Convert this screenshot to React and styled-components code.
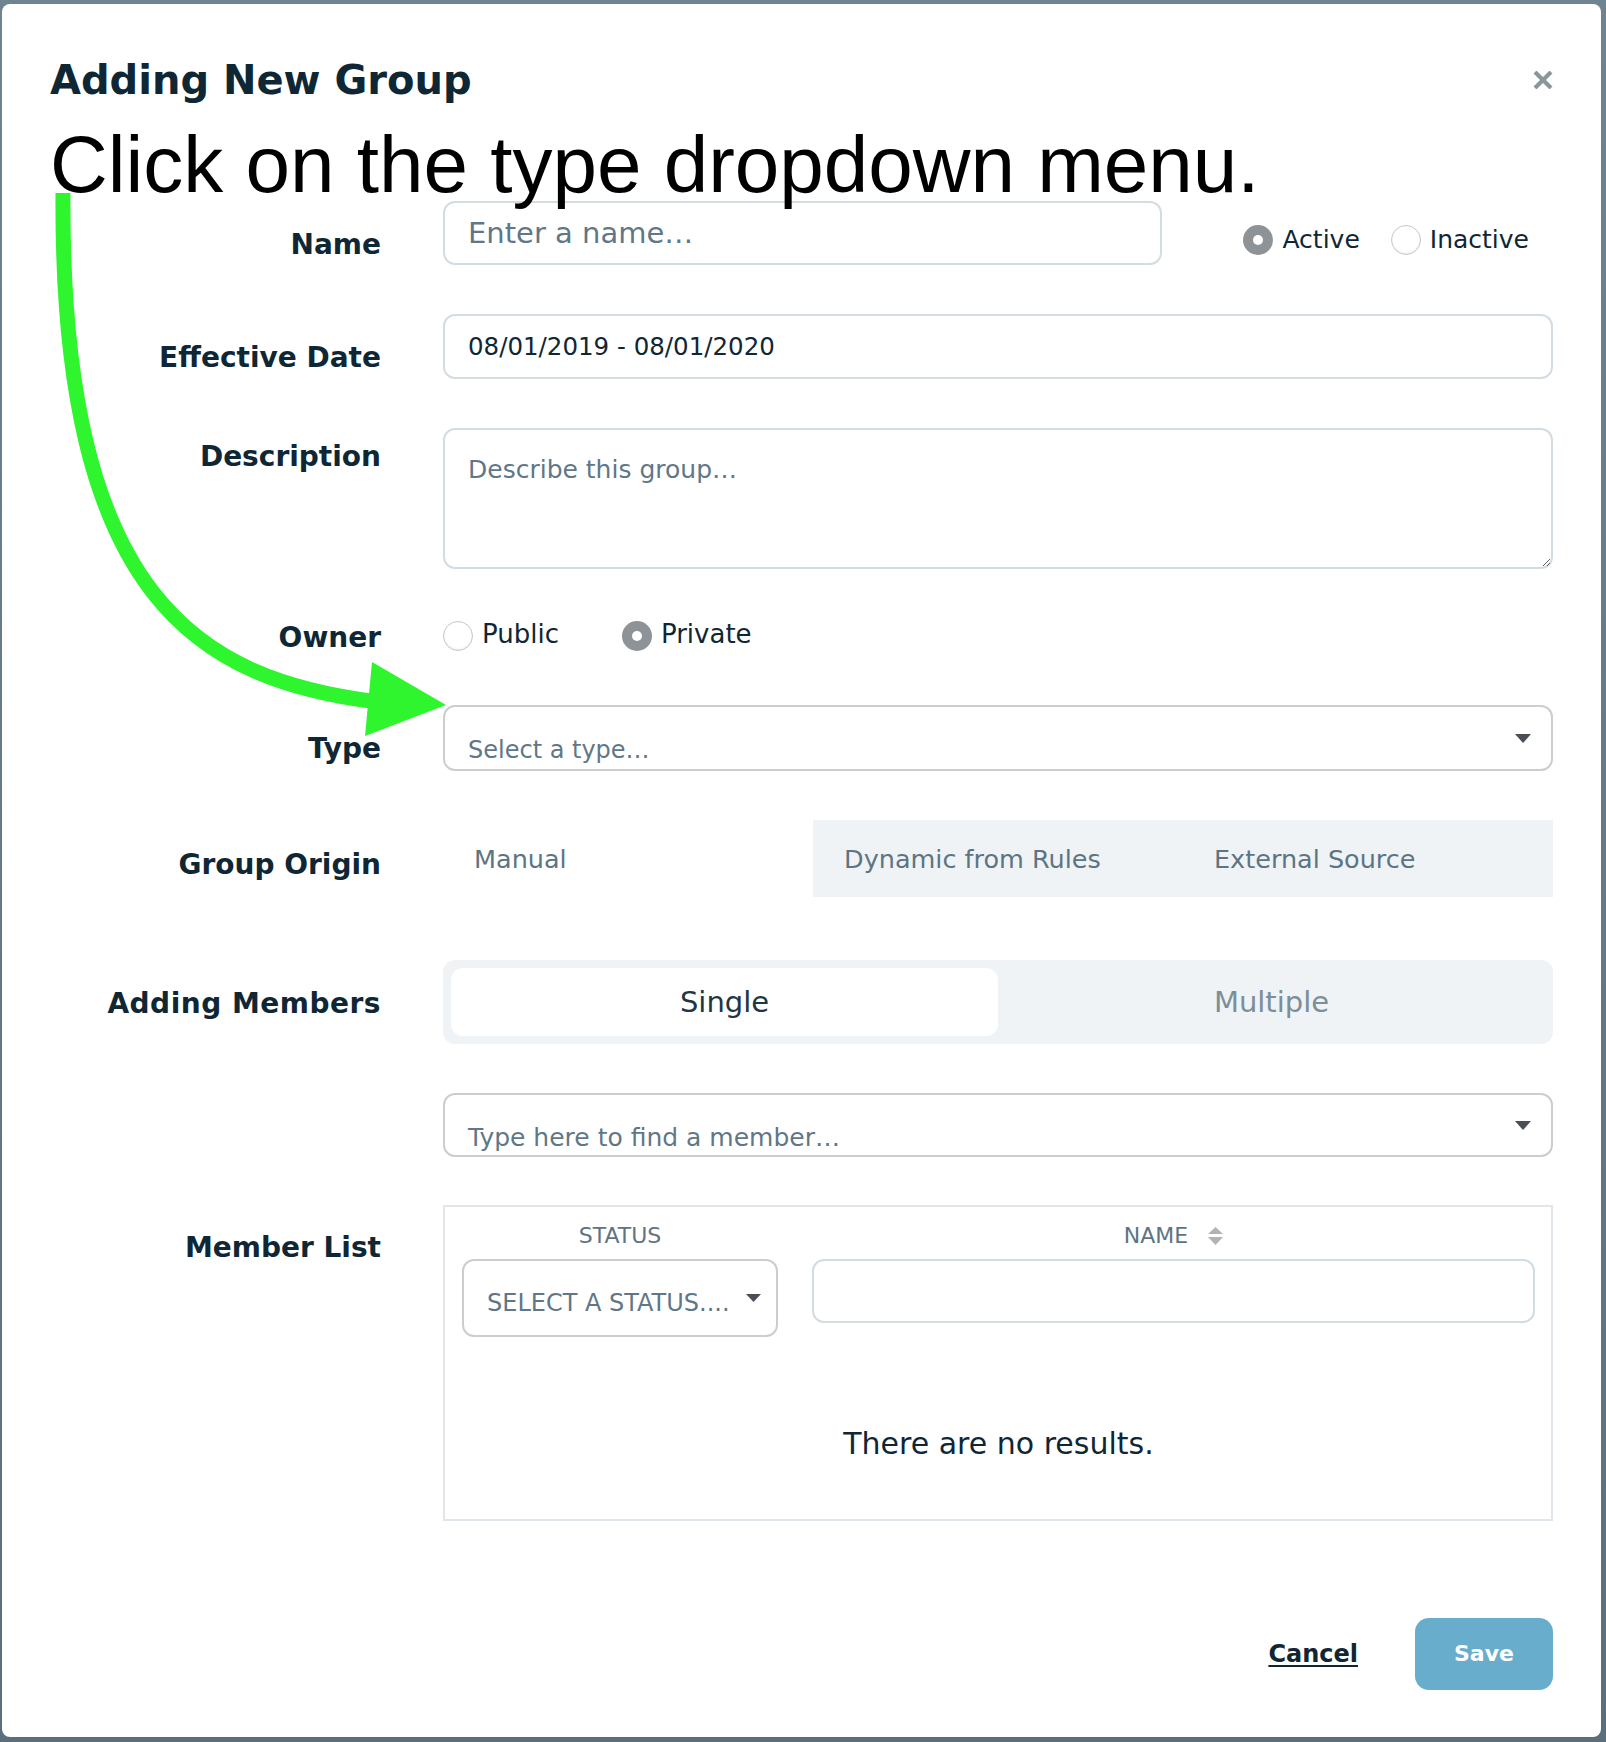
import React from "react";
import styled, { createGlobalStyle } from "styled-components";

const GlobalStyle = createGlobalStyle`
  html, body { margin: 0; padding: 0; }
  body { font-family: "DejaVu Sans", sans-serif; background: #637884; }
  *, *::before, *::after { box-sizing: border-box; }
`;

const FONT = `"DejaVu Sans", "Noto Sans", sans-serif`;
const INK = "#0f2735";
const MUTED = "#5f7786";

const Page = styled.div`
  position: relative;
  width: 1606px;
  min-height: 1742px;
  padding: 4px 5px 5px 2px;
  background: linear-gradient(180deg, #6e8491 0%, #5b6e7b 100%);
`;

const Modal = styled.div`
  background: #fff;
  border-radius: 8px;
  padding: 52px 48px 47px;
  display: flex;
  flex-direction: column;
`;

const Header = styled.div`
  display: flex;
  align-items: center;
  justify-content: space-between;
  height: 48px;
  margin-bottom: 97px;
`;

const Title = styled.h2`
  margin: 0;
  font: 700 40px/48px ${FONT};
  color: ${INK};
`;

const CloseButton = styled.button`
  border: 0;
  background: none;
  padding: 0;
  width: 20px;
  height: 18px;
  display: flex;
  cursor: pointer;
`;

const Row = styled.div`
  display: grid;
  grid-template-columns: 331px 1fr;
  column-gap: 62px;
  margin-bottom: ${(p) => (p.$gap !== undefined ? p.$gap : 49)}px;
`;

const Label = styled.div`
  font: 700 28px/34px ${FONT};
  color: ${INK};
  text-align: right;
  white-space: nowrap;
  letter-spacing: ${(p) => p.$ls || 0}px;
  padding-top: ${(p) => p.$offset || 0}px;
`;

const Field = styled.div`
  display: flex;
  align-items: ${(p) => p.$align || "flex-start"};
  min-height: ${(p) => p.$h || 0}px;
`;

const TextInput = styled.input`
  width: ${(p) => p.$width || "100%"};
  height: ${(p) => p.$h || 64}px;
  border: 2px solid #d3dde1;
  border-radius: 12px;
  padding: 0 23px;
  font: 400 ${(p) => p.$size || 25}px ${FONT};
  color: ${INK};
  background: #fff;
  outline: none;
  &::placeholder { color: ${MUTED}; opacity: 1; }
`;

const TextArea = styled.textarea`
  width: 100%;
  height: 141px;
  border: 2px solid #d3dde1;
  border-radius: 12px;
  padding: 25px 23px;
  font: 400 25px/30px ${FONT};
  color: ${INK};
  outline: none;
  display: block;
  &::placeholder { color: ${MUTED}; opacity: 1; }
`;

const RadioGroup = styled.div`
  display: flex;
  align-items: center;
  gap: ${(p) => p.$gap}px;
  margin: ${(p) => p.$margin || 0};
`;

const RadioItem = styled.label`
  display: flex;
  align-items: center;
  gap: 9px;
  font: 400 ${(p) => p.$size || 25}px/30px ${FONT};
  color: ${INK};
  white-space: nowrap;
`;

const RadioText = styled.span`
  position: relative;
  top: ${(p) => p.$shift || 0}px;
`;

const RadioCircle = styled.span`
  width: 30px;
  height: 30px;
  flex: none;
  border-radius: 50%;
  display: flex;
  align-items: center;
  justify-content: center;
  background: ${(p) => (p.$checked ? "#8e9398" : "#fff")};
  border: ${(p) => (p.$checked ? "none" : "1px solid #c3c7ca")};
  box-shadow: ${(p) => (p.$checked ? "none" : "inset 0 -1px 2px rgba(0,0,0,0.08)")};
  &::after {
    content: "";
    width: 10px;
    height: 10px;
    border-radius: 50%;
    background: #fff;
    display: ${(p) => (p.$checked ? "block" : "none")};
  }
`;

const Radio = ({ checked, children, size, shift }) => (
  <RadioItem $size={size}>
    <RadioCircle $checked={checked} />
    <RadioText $shift={shift}>{children}</RadioText>
  </RadioItem>
);

const SelectBox = styled.div`
  width: 100%;
  height: ${(p) => p.$h}px;
  border: 2px solid #cbcecf;
  border-radius: 12px;
  padding: 0 ${(p) => p.$padRight || 20}px 0 23px;
  display: flex;
  justify-content: space-between;
  background: #fff;
`;

const SelectText = styled.span`
  margin-top: ${(p) => p.$top}px;
  font: 400 ${(p) => p.$size || 24}px/30px ${FONT};
  color: ${MUTED};
  white-space: nowrap;
`;

const CaretIcon = styled.svg`
  align-self: center;
  flex: none;
`;

const Caret = ({ w = 16, h = 9 }) => (
  <CaretIcon width={w} height={h} viewBox={`0 0 ${w} ${h}`}>
    <polygon points={`0,0 ${w},0 ${w / 2},${h}`} fill="#4a4f55" />
  </CaretIcon>
);

const Select = ({ h, top, size, children, padRight, caretW, caretH }) => (
  <SelectBox $h={h} $padRight={padRight}>
    <SelectText $top={top} $size={size}>{children}</SelectText>
    <Caret w={caretW} h={caretH} />
  </SelectBox>
);

const Tabs = styled.div`
  width: 100%;
  display: grid;
  grid-template-columns: repeat(3, 1fr);
  height: 77px;
`;

const Tab = styled.div`
  background: ${(p) => (p.$active ? "#fff" : "#eff3f6")};
  display: flex;
  align-items: center;
  padding-left: 31px;
  font: 400 25.5px/30px ${FONT};
  color: #5d7583;
  white-space: nowrap;
`;

const Segmented = styled.div`
  width: 100%;
  height: 84px;
  padding: 8px;
  background: #eff3f6;
  border-radius: 12px;
  display: grid;
  grid-template-columns: 1fr 1fr;
`;

const Segment = styled.div`
  display: flex;
  align-items: center;
  justify-content: center;
  border-radius: 12px;
  background: ${(p) => (p.$active ? "#fff" : "transparent")};
  color: ${(p) => (p.$active ? "#1f3644" : "#7d8e98")};
  font: 400 29px/34px ${FONT};
`;

const Table = styled.div`
  width: 100%;
  height: 316px;
  border: 2px solid #e0e6ea;
  padding: 16px 16px 0 17px;
`;

const TableGrid = styled.div`
  display: grid;
  grid-template-columns: 316px 1fr;
  column-gap: 34px;
  align-items: start;
  row-gap: ${(p) => p.$rowGap || 0}px;
`;

const HeadCell = styled.div`
  display: flex;
  justify-content: center;
  align-items: center;
  gap: 20px;
  font: 400 22px/26px ${FONT};
  color: #5d7583;
  text-transform: uppercase;
`;

const SortIcon = () => (
  <svg width="15" height="19" viewBox="0 0 15 19">
    <polygon points="7.5,0 15,7 0,7" fill="#b3b3b3" />
    <polygon points="0,10 15,10 7.5,18" fill="#b3b3b3" />
  </svg>
);

const Empty = styled.div`
  margin-top: 89px;
  text-align: center;
  font: 400 30px/36px ${FONT};
  color: ${INK};
`;

const Footer = styled.div`
  display: flex;
  justify-content: flex-end;
  align-items: center;
  gap: 57px;
  margin-top: 97px;
`;

const CancelLink = styled.a`
  font: 700 24px/30px ${FONT};
  color: ${INK};
  text-decoration: underline;
  text-decoration-thickness: 2px;
  text-underline-offset: 3px;
  cursor: pointer;
`;

const SaveButton = styled.button`
  width: 138px;
  height: 72px;
  border: 0;
  border-radius: 14px;
  background: #69adcc;
  color: #fff;
  font: 700 22px/30px ${FONT};
  cursor: pointer;
`;

const Instruction = styled.div`
  position: absolute;
  left: 50px;
  top: 119px;
  font: 400 80px/92px "Liberation Sans", Arial, sans-serif;
  color: #000;
  white-space: nowrap;
  pointer-events: none;
`;

const ArrowLayer = styled.svg`
  position: absolute;
  left: 0;
  top: 0;
  pointer-events: none;
`;

export default function App() {
  return (
    <>
      <GlobalStyle />
      <Page>
        <Modal>
          <Header>
            <Title>Adding New Group</Title>
            <CloseButton aria-label="Close">
              <svg width="20" height="18" viewBox="0 0 20 18">
                <path d="M2 1 L18 17 M18 1 L2 17" stroke="#8a959c" strokeWidth="4.2" />
              </svg>
            </CloseButton>
          </Header>

          <Row>
            <Label $offset={27}>Name</Label>
            <Field>
              <TextInput $width="719px" $size={29} placeholder="Enter a name…" />
              <RadioGroup $gap={31} $margin="24px 24px 0 auto">
                <Radio checked>Active</Radio>
                <Radio>Inactive</Radio>
              </RadioGroup>
            </Field>
          </Row>

          <Row>
            <Label $offset={27}>Effective Date</Label>
            <Field>
              <TextInput $h={65} $size={24.5} readOnly value="08/01/2019 - 08/01/2020" />
            </Field>
          </Row>

          <Row>
            <Label $offset={12}>Description</Label>
            <Field>
              <TextArea placeholder="Describe this group…" />
            </Field>
          </Row>

          <Row>
            <Label $offset={3}>Owner</Label>
            <Field $align="center" $h={38}>
              <RadioGroup $gap={63} $margin="-2px 0 0 0">
                <Radio size={26} shift={-2}>Public</Radio>
                <Radio size={26} shift={-2} checked>Private</Radio>
              </RadioGroup>
            </Field>
          </Row>

          <Row>
            <Label $offset={27}>Type</Label>
            <Field>
              <Select h={66} top={28} size={24}>Select a type…</Select>
            </Field>
          </Row>

          <Row $gap={63}>
            <Label $offset={28}>Group Origin</Label>
            <Field>
              <Tabs>
                <Tab $active>Manual</Tab>
                <Tab>Dynamic from Rules</Tab>
                <Tab>External Source</Tab>
              </Tabs>
            </Field>
          </Row>

          <Row>
            <Label $offset={27} $ls={0.5}>Adding Members</Label>
            <Field>
              <Segmented>
                <Segment $active>Single</Segment>
                <Segment>Multiple</Segment>
              </Segmented>
            </Field>
          </Row>

          <Row $gap={48}>
            <Label />
            <Field>
              <Select h={64} top={28} size={25}>Type here to find a member…</Select>
            </Field>
          </Row>

          <Row $gap={0}>
            <Label $offset={26}>Member List</Label>
            <Field>
              <Table>
                <TableGrid $rowGap={10}>
                  <HeadCell>Status</HeadCell>
                  <HeadCell>
                    Name
                    <SortIcon />
                  </HeadCell>
                  <Select h={78} top={27} size={24} padRight={15} caretW={15} caretH={8}>
                    SELECT A STATUS....
                  </Select>
                  <TextInput $h={64} />
                </TableGrid>
                <Empty>There are no results.</Empty>
              </Table>
            </Field>
          </Row>

          <Footer>
            <CancelLink>Cancel</CancelLink>
            <SaveButton>Save</SaveButton>
          </Footer>
        </Modal>

        <Instruction>Click on the type dropdown menu.</Instruction>
        <ArrowLayer width="1606" height="1742" viewBox="0 0 1606 1742">
          <path
            d="M63 193 C60 600, 200 680, 378 702"
            fill="none"
            stroke="#2ef52e"
            strokeWidth="15"
          />
          <polygon points="372,662 446,705 365,736" fill="#2ef52e" />
        </ArrowLayer>
      </Page>
    </>
  );
}
